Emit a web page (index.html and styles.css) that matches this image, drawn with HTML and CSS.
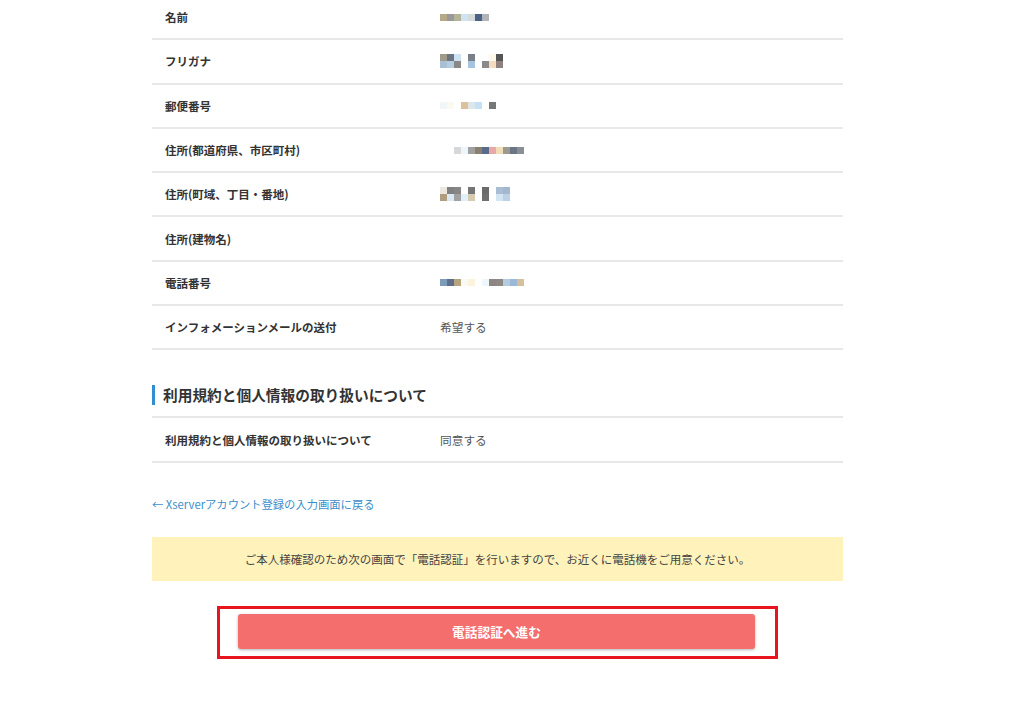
FILE: index.html
```html
<!DOCTYPE html>
<html lang="ja">
<head>
<meta charset="utf-8">
<title>確認</title>
<link rel="stylesheet" href="styles.css">
</head>
<body>
<main class="page">
  <div class="table first">
    <div class="row"><div class="label">名前</div><div class="value">
      <span class="mosaic m7"><i class="a1"></i><i class="a2"></i><i class="a3"></i><i class="a4"></i><i class="a5"></i><i class="a6"></i><i class="a7"></i></span>
    </div></div>
    <div class="row"><div class="label">フリガナ</div><div class="value">
      <span class="mosaic m9 two">
        <i class="b1"></i><i class="b2"></i><i class="b3"></i><i></i><i class="b4"></i><i></i><i></i><i class="b5"></i><i class="b6"></i>
        <i class="b7"></i><i class="b8"></i><i class="b9"></i><i></i><i class="b10"></i><i></i><i class="b11"></i><i class="b12"></i><i class="b13"></i>
      </span>
    </div></div>
    <div class="row"><div class="label">郵便番号</div><div class="value">
      <span class="mosaic m8"><i class="c1"></i><i class="c2"></i><i></i><i class="c3"></i><i class="c4"></i><i class="c5"></i><i></i><i class="c6"></i></span>
    </div></div>
    <div class="row"><div class="label">住所(都道府県、市区町村)</div><div class="value">
      <span class="mosaic m12"><i></i><i></i><i class="d1"></i><i class="d2"></i><i class="d3"></i><i class="d4"></i><i class="d5"></i><i class="d6"></i><i class="d7"></i><i class="d8"></i><i class="d9"></i><i class="d10"></i></span>
    </div></div>
    <div class="row"><div class="label">住所(町域、丁目・番地)</div><div class="value">
      <span class="mosaic m10 two">
        <i class="e1"></i><i class="e2"></i><i class="e3"></i><i></i><i class="e4"></i><i></i><i class="e5"></i><i></i><i class="e6"></i><i class="e7"></i>
        <i class="e8"></i><i class="e9"></i><i class="e10"></i><i class="e11"></i><i class="e12"></i><i></i><i class="e13"></i><i></i><i class="e14"></i><i class="e15"></i>
      </span>
    </div></div>
    <div class="row"><div class="label">住所(建物名)</div><div class="value"></div></div>
    <div class="row"><div class="label">電話番号</div><div class="value">
      <span class="mosaic m12"><i class="f1"></i><i class="f2"></i><i class="f3"></i><i class="f4"></i><i class="f5"></i><i></i><i class="f6"></i><i class="f7"></i><i class="f8"></i><i class="f9"></i><i class="f10"></i><i class="f11"></i></span>
    </div></div>
    <div class="row"><div class="label">インフォメーションメールの送付</div><div class="value">希望する</div></div>
  </div>

  <h2 class="heading">利用規約と個人情報の取り扱いについて</h2>
  <div class="table second">
    <div class="row"><div class="label">利用規約と個人情報の取り扱いについて</div><div class="value">同意する</div></div>
  </div>

  <a class="back" href="#">← Xserverアカウント登録の入力画面に戻る</a>

  <div class="notice">ご本人様確認のため次の画面で「電話認証」を行いますので、お近くに電話機をご用意ください。</div>

  <div class="actions">
    <div class="frame">
      <button class="submit" type="button">電話認証へ進む</button>
    </div>
  </div>
</main>
</body>
</html>
```

FILE: styles.css
```css
html, body {
  margin: 0;
  padding: 0;
  background: #ffffff;
}
body {
  font-family: "Noto Sans CJK JP", "Noto Sans", sans-serif;
  color: #333333;
}
.page {
  width: 691px;
  margin: -4px 0 0 152px;
}
.table .row {
  display: flex;
  align-items: center;
  height: 42.3px;
  border-bottom: 2px solid #e8e8e8;
  padding-left: 13px;
}
.second {
  border-top: 2px solid #e8e8e8;
}
.label {
  width: 275px;
  flex: none;
  font-size: 11.5px;
  font-weight: bold;
  color: #333333;
  line-height: 16px;
}
.value {
  font-size: 11.7px;
  color: #555555;
  line-height: 16px;
  display: flex;
  align-items: center;
}
.mosaic {
  display: grid;
  grid-auto-rows: 7px;
}
.mosaic i { display: block; }
.m7 { grid-template-columns: repeat(7, 7px); }
.m8 { grid-template-columns: repeat(8, 7px); }
.m9 { grid-template-columns: repeat(9, 7px); }
.m10 { grid-template-columns: repeat(10, 7px); }
.m12 { grid-template-columns: repeat(12, 7px); }
.two { margin-top: 0; }

.a1 { background: #b5a98a; } .a2 { background: #999999; } .a3 { background: #b4b49a; }
.a4 { background: #cfe3f0; } .a5 { background: #d5dada; } .a6 { background: #4a6385; } .a7 { background: #b0b3b8; }

.b1 { background: #a09a8a; } .b2 { background: #6b7480; } .b3 { background: #cde3f3; }
.b4 { background: #7a8088; } .b5 { background: #fdf8e8; } .b6 { background: #555555; }
.b7 { background: #a9bfd3; } .b8 { background: #b5cde0; } .b9 { background: #888888; }
.b10 { background: #a7c4de; } .b11 { background: #8a8a8a; } .b12 { background: #f5dcc0; } .b13 { background: #8f8080; }

.c1 { background: #f1f6f8; } .c2 { background: #fafaf2; } .c3 { background: #dcc19a; }
.c4 { background: #dde6ea; } .c5 { background: #c6e0f4; } .c6 { background: #777777; }

.d1 { background: #d8d8d8; } .d2 { background: #eef6fb; } .d3 { background: #a0a0a0; }
.d4 { background: #8a8070; } .d5 { background: #5a6a8a; } .d6 { background: #e9a8a8; }
.d7 { background: #f3dcb8; } .d8 { background: #9a9a90; } .d9 { background: #6a7585; } .d10 { background: #8a8e95; }

.e1 { background: #ebe7df; } .e2 { background: #7f8082; } .e3 { background: #868686; }
.e4 { background: #737577; } .e5 { background: #6b6b6b; } .e6 { background: #a9bdd5; } .e7 { background: #a3b7cf; }
.e8 { background: #ae9e7e; } .e9 { background: #dbe9f5; } .e10 { background: #9fa1a3; }
.e11 { background: #e2eff9; } .e12 { background: #d6cab0; } .e13 { background: #707070; }
.e14 { background: #d3e4f3; } .e15 { background: #bcd1e6; }

.f1 { background: #7d9cbc; } .f2 { background: #5f6f8b; } .f3 { background: #b7a47f; }
.f4 { background: #fafaf5; } .f5 { background: #fbf3dc; } .f6 { background: #eef7fc; }
.f7 { background: #8c8782; } .f8 { background: #8e8984; } .f9 { background: #b4cce0; }
.f10 { background: #9ab8d8; } .f11 { background: #d6bf9c; }

.heading {
  margin: 35px 0 11px 0;
  border-left: 3px solid #2f8fd2;
  padding-left: 8px;
  font-size: 14.7px;
  line-height: 20px;
  font-weight: bold;
  color: #333333;
}
.back {
  display: block;
  margin-top: 33px;
  font-size: 11.3px;
  line-height: 16px;
  color: #3d8fcc;
  text-decoration: none;
}
.notice {
  margin-top: 25px;
  height: 44px;
  background: #fff2bb;
  display: flex;
  align-items: center;
  justify-content: center;
  font-size: 11.5px;
  color: #444444;
}
.actions {
  display: flex;
  justify-content: center;
  margin-top: 25px;
}
.frame {
  border: 3px solid #e8141e;
  padding: 5px 20px 7px 18px;
}
.submit {
  display: block;
  width: 517px;
  height: 35px;
  border: none;
  border-radius: 3px;
  background: #f46e6e;
  box-shadow: 0 1px 3px rgba(0, 0, 0, 0.3);
  color: #ffffff;
  font-family: "Noto Sans CJK JP", "Noto Sans", sans-serif;
  font-size: 12.7px;
  font-weight: bold;
}
```
